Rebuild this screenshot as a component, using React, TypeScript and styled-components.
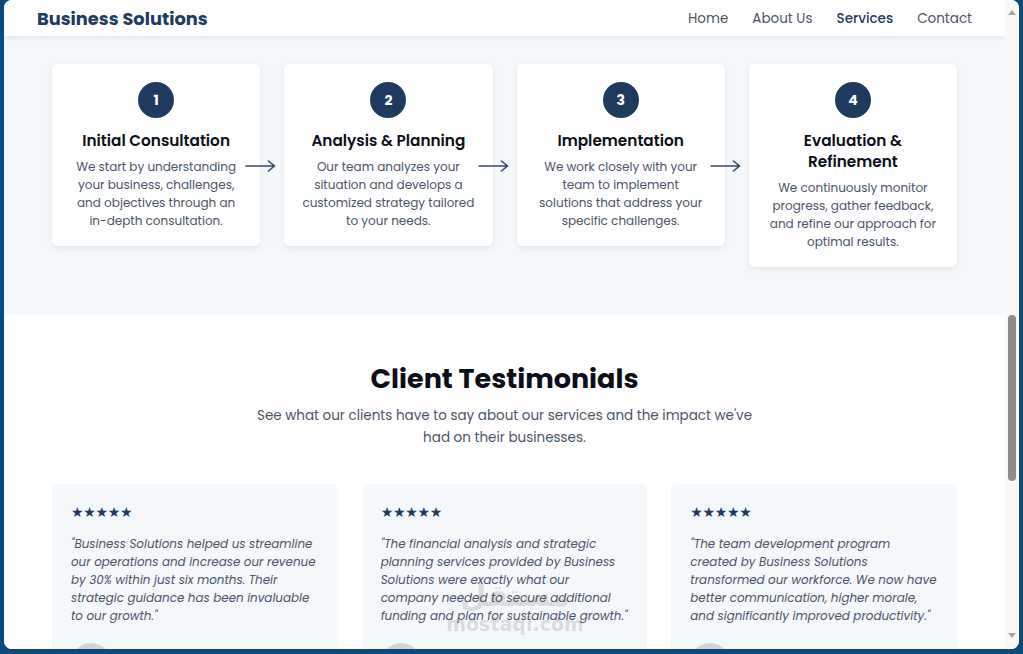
import React from "react";
import styled, { createGlobalStyle } from "styled-components";

const GlobalStyle = createGlobalStyle`
  html, body { margin: 0; padding: 0; height: 100%; }
  body {
    background: #0c4a7e;
    font-family: Poppins, "Open Sans", "Noto Sans", sans-serif;
    overflow: hidden;
  }
  * { box-sizing: border-box; }
`;

const navy = "#1e3a5f";
const textGray = "#4a5568";

const Frame = styled.div`
  width: 1023px;
  height: 654px;
  padding: 0 4px 5px 4px;
`;

const Window = styled.div`
  height: 100%;
  display: flex;
  border-radius: 8px;
  overflow: hidden;
  background: #fff;
  position: relative;
`;

const Viewport = styled.div`
  flex: 1;
  display: flex;
  flex-direction: column;
  overflow: hidden;
  min-width: 0;
`;

const Scrollbar = styled.div`
  width: 14px;
  background: #f8f8f8;
  position: relative;
`;

const ScrollArrow = styled.div<{ $down?: boolean }>`
  width: 0;
  height: 0;
  border-left: 4px solid transparent;
  border-right: 4px solid transparent;
  ${(p) => (p.$down ? `border-top: 5px solid #a3a3a3;` : `border-bottom: 5px solid #a3a3a3;`)}
  position: absolute;
  left: 3px;
  ${(p) => (p.$down ? `bottom: 11px;` : `top: 10px;`)}
`;

const Thumb = styled.div`
  position: absolute;
  left: 3px;
  top: 315px;
  width: 8px;
  height: 166px;
  border-radius: 4px;
  background: #8c8c8c;
`;

const Header = styled.header`
  height: 36px;
  flex-shrink: 0;
  background: #fff;
  display: flex;
  align-items: center;
  justify-content: space-between;
  padding: 0 33px;
  box-shadow: 0 2px 5px rgba(0, 0, 0, 0.08);
  position: relative;
  z-index: 2;
`;

const Logo = styled.div`
  font-size: 17.8px;
  font-weight: 700;
  color: ${navy};
`;

const Nav = styled.nav`
  display: flex;
  gap: 24px;
  padding-top: 2px;
`;

const NavLink = styled.a<{ $active?: boolean }>`
  font-size: 13.5px;
  color: ${(p) => (p.$active ? navy : textGray)};
  font-weight: ${(p) => (p.$active ? 500 : 400)};
  text-decoration: none;
`;

const ProcessSection = styled.section`
  background: #f5f8fb;
  padding: 28px 48px 48px;
  flex-shrink: 0;
`;

const Steps = styled.div`
  display: flex;
  gap: 24px;
  align-items: flex-start;
  max-width: 905px;
  margin: 0 auto;
`;

const StepCard = styled.div`
  position: relative;
  flex: 1;
  background: #fff;
  border-radius: 6px;
  box-shadow: 0 2px 6px rgba(0, 0, 0, 0.08);
  padding: 18px 17.5px 16px;
  display: flex;
  flex-direction: column;
  align-items: center;
  text-align: center;
`;

const StepNumber = styled.div`
  width: 36px;
  height: 36px;
  border-radius: 50%;
  background: ${navy};
  color: #fff;
  font-weight: 700;
  font-size: 14px;
  display: flex;
  align-items: center;
  justify-content: center;
  margin-bottom: 12px;
`;

const StepTitle = styled.h3`
  margin: 0 0 7px;
  font-size: 15.3px;
  line-height: 21px;
  font-weight: 600;
  color: #0b0f19;
`;

const StepText = styled.p`
  margin: 0;
  font-size: 12px;
  line-height: 18px;
  color: ${textGray};
`;

const Arrow = styled.svg`
  position: absolute;
  right: -16px;
  top: 96px;
  width: 31px;
  height: 12px;
`;

const TestimonialSection = styled.section`
  background: #fff;
  padding: 47px 48px 0;
  display: flex;
  flex-direction: column;
  align-items: center;
`;

const Heading = styled.h2`
  margin: 0 0 9px;
  font-size: 27px;
  line-height: 34px;
  font-weight: 700;
  color: #0b0f19;
`;

const Subtitle = styled.p`
  margin: 0 0 35px;
  max-width: 510px;
  text-align: center;
  font-size: 13.5px;
  line-height: 22px;
  color: ${textGray};
`;

const Testimonials = styled.div`
  display: grid;
  grid-template-columns: repeat(3, 1fr);
  gap: 24px;
  width: 905px;
`;

const TestimonialCard = styled.div`
  background: #f5f8fb;
  border-radius: 6px;
  padding: 19px 19px 20px;
`;

const Stars = styled.div`
  color: ${navy};
  font-size: 14px;
  line-height: 18px;
  letter-spacing: -0.3px;
  font-family: "DejaVu Sans", sans-serif;
  margin-bottom: 14px;
`;

const Quote = styled.p`
  margin: 0 0 18px;
  font-style: italic;
  font-size: 11.9px;
  line-height: 18px;
  color: ${textGray};
`;

const Author = styled.div`
  display: flex;
  align-items: center;
  gap: 12px;
`;

const Avatar = styled.div`
  width: 40px;
  height: 40px;
  border-radius: 50%;
  background: #d1d5db;
`;

const AuthorName = styled.div`
  font-weight: 600;
  font-size: 14px;
  color: #0b0f19;
  margin-top: -8px;
`;

const Watermark = styled.div`
  position: absolute;
  left: 446px;
  top: 578px;
  width: 130px;
  display: flex;
  flex-direction: column;
  align-items: center;
  color: rgba(70, 70, 70, 0.17);
  font-weight: 700;
  pointer-events: none;
  z-index: 5;
  font-family: "DejaVu Sans", "Noto Sans", sans-serif;
`;

const WmArabic = styled.div`
  font-size: 30px;
  line-height: 36px;
`;

const WmLatin = styled.div`
  font-size: 19px;
  line-height: 20px;
`;

const steps = [
  {
    n: 1,
    title: "Initial Consultation",
    text: "We start by understanding your business, challenges, and objectives through an in-depth consultation.",
  },
  {
    n: 2,
    title: "Analysis & Planning",
    text: "Our team analyzes your situation and develops a customized strategy tailored to your needs.",
  },
  {
    n: 3,
    title: "Implementation",
    text: "We work closely with your team to implement solutions\u00A0that address your specific challenges.",
  },
  {
    n: 4,
    title: "Evaluation & Refinement",
    text: "We continuously monitor progress, gather feedback, and refine our approach for optimal results.",
  },
];

const testimonials = [
  {
    quote:
      "\"Business Solutions helped us streamline our operations and increase our revenue by 30% within just six months. Their strategic guidance has been invaluable to our growth.\"",
    name: "Robert Williams",
  },
  {
    quote:
      "\"The financial analysis and strategic planning services provided by Business Solutions were exactly what our company needed to secure additional funding and plan for sustainable growth.\"",
    name: "Jennifer Chen",
  },
  {
    quote:
      "\"The team development program created by Business Solutions transformed our workforce. We now have better communication, higher morale, and significantly improved productivity.\"",
    name: "David Martinez",
  },
];

export default function App() {
  return (
    <>
      <GlobalStyle />
      <Frame>
        <Window>
          <Viewport>
            <Header>
              <Logo>Business Solutions</Logo>
              <Nav>
                <NavLink>Home</NavLink>
                <NavLink>About Us</NavLink>
                <NavLink $active>Services</NavLink>
                <NavLink>Contact</NavLink>
              </Nav>
            </Header>
            <ProcessSection>
              <Steps>
                {steps.map((s, i) => (
                  <StepCard key={s.n}>
                    <StepNumber>{s.n}</StepNumber>
                    <StepTitle>{s.title}</StepTitle>
                    <StepText>{s.text}</StepText>
                    {i < steps.length - 1 && (
                      <Arrow viewBox="0 0 31 12">
                        <path
                          d="M1 6 H29 M23.5 1 L29.5 6 L23.5 11"
                          fill="none"
                          stroke="#34496a"
                          strokeWidth="1.6"
                          strokeLinecap="round"
                          strokeLinejoin="round"
                        />
                      </Arrow>
                    )}
                  </StepCard>
                ))}
              </Steps>
            </ProcessSection>
            <TestimonialSection>
              <Heading>Client Testimonials</Heading>
              <Subtitle>
                See what our clients have to say about our services and the impact we've had on their businesses.
              </Subtitle>
              <Testimonials>
                {testimonials.map((t) => (
                  <TestimonialCard key={t.name}>
                    <Stars>★★★★★</Stars>
                    <Quote>{t.quote}</Quote>
                    <Author>
                      <Avatar />
                      <AuthorName>{t.name}</AuthorName>
                    </Author>
                  </TestimonialCard>
                ))}
              </Testimonials>
            </TestimonialSection>
          </Viewport>
          <Scrollbar>
            <ScrollArrow />
            <Thumb />
            <ScrollArrow $down />
          </Scrollbar>
          <Watermark>
            <WmArabic>مستقل</WmArabic>
            <WmLatin>mostaql.com</WmLatin>
          </Watermark>
        </Window>
      </Frame>
    </>
  );
}
